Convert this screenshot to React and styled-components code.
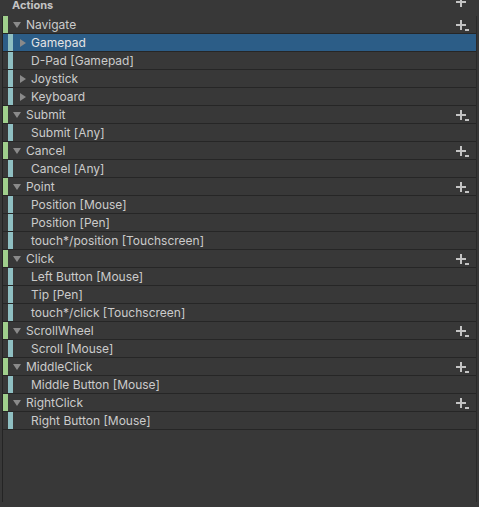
import React from "react";
import styled, { createGlobalStyle } from "styled-components";

const actions = [
  {
    name: "Navigate",
    bindings: [
      { name: "Gamepad", composite: true, selected: true },
      { name: "D-Pad [Gamepad]" },
      { name: "Joystick", composite: true },
      { name: "Keyboard", composite: true },
    ],
  },
  { name: "Submit", bindings: [{ name: "Submit [Any]" }] },
  { name: "Cancel", bindings: [{ name: "Cancel [Any]" }] },
  {
    name: "Point",
    bindings: [
      { name: "Position [Mouse]" },
      { name: "Position [Pen]" },
      { name: "touch*/position [Touchscreen]" },
    ],
  },
  {
    name: "Click",
    bindings: [
      { name: "Left Button [Mouse]" },
      { name: "Tip [Pen]" },
      { name: "touch*/click [Touchscreen]" },
    ],
  },
  { name: "ScrollWheel", bindings: [{ name: "Scroll [Mouse]" }] },
  { name: "MiddleClick", bindings: [{ name: "Middle Button [Mouse]" }] },
  { name: "RightClick", bindings: [{ name: "Right Button [Mouse]" }] },
];

const Global = createGlobalStyle`
  html, body {
    margin: 0;
    padding: 0;
    background: #383838;
  }
  body {
    font-family: Inter, "Noto Sans", sans-serif;
    font-size: 12px;
    color: #cbcbcb;
  }
`;

const Panel = styled.div`
  height: 507px;
  width: 479px;
  display: flex;
  flex-direction: column;
  background: #383838;
  overflow: hidden;
`;

const Header = styled.div`
  height: 16px;
  flex: none;
  display: flex;
  align-items: flex-start;
  justify-content: space-between;
  padding: 0 9px 0 12px;
  font-weight: 700;
  font-size: 11px;
  color: #c4c4c4;
  line-height: 11px;
  box-sizing: border-box;

  svg {
    margin-top: -4px;
  }
`;

const Tree = styled.div`
  flex: 0 0 486px;
  margin-left: 2px;
  margin-right: 2px;
  border-left: 1px solid #242424;
  border-right: 1px solid #2a2a2a;
  display: flex;
  flex-direction: column;
`;

const Row = styled.div`
  height: 18px;
  flex: none;
  box-sizing: border-box;
  border-bottom: 1px solid #262626;
  display: flex;
  align-items: center;
  background: ${(p) => (p.$selected ? "#2c5d87" : "transparent")};
  color: ${(p) => (p.$selected ? "#e4e4e4" : "#cbcbcb")};
  padding-right: 6px;
`;

const Bar = styled.span`
  flex: none;
  width: 5px;
  height: 17px;
  margin-left: ${(p) => (p.$binding ? "5px" : "0")};
  background: ${(p) => (p.$binding ? "#8fbfc2" : "#9fcf8c")};
`;

const Arrow = styled.span`
  flex: none;
  width: 0;
  height: 0;
  margin-left: ${(p) => (p.$binding ? "7px" : "5px")};
  margin-right: 5px;
  border-style: solid;
  ${(p) =>
    p.$open
      ? `border-width: 6px 4px 0 4px; border-color: #8a8a8a transparent transparent transparent;`
      : `border-width: 4px 0 4px 6px; border-color: transparent transparent transparent #8a8a8a;`}
`;

const Label = styled.span`
  flex: 1;
  white-space: nowrap;
  margin-left: ${(p) => p.$indent || 0}px;
  line-height: 17px;
`;

const PlusButton = ({ drop }) => (
  <svg width="14" height="12" viewBox="0 0 14 12">
    <rect x="4" y="1" width="2" height="10" fill="#c4c4c4" />
    <rect x="0" y="5" width="10" height="2" fill="#c4c4c4" />
    {drop && <rect x="9" y="10" width="4" height="2" fill="#c4c4c4" />}
  </svg>
);

const Footer = styled.div`
  flex: 1;
  background: #383838;
`;

export default function App() {
  return (
    <>
      <Global />
      <Panel>
        <Header>
          <span>Actions</span>
          <PlusButton />
        </Header>
        <Tree>
          {actions.map((a) => (
            <React.Fragment key={a.name}>
              <Row>
                <Bar />
                <Arrow $open />
                <Label>{a.name}</Label>
                <PlusButton drop />
              </Row>
              {a.bindings.map((b) => (
                <Row key={b.name} $selected={b.selected}>
                  <Bar $binding />
                  {b.composite ? <Arrow $binding /> : null}
                  <Label $indent={b.composite ? 0 : 18}>{b.name}</Label>
                </Row>
              ))}
            </React.Fragment>
          ))}
          <Footer />
        </Tree>
      </Panel>
    </>
  );
}
